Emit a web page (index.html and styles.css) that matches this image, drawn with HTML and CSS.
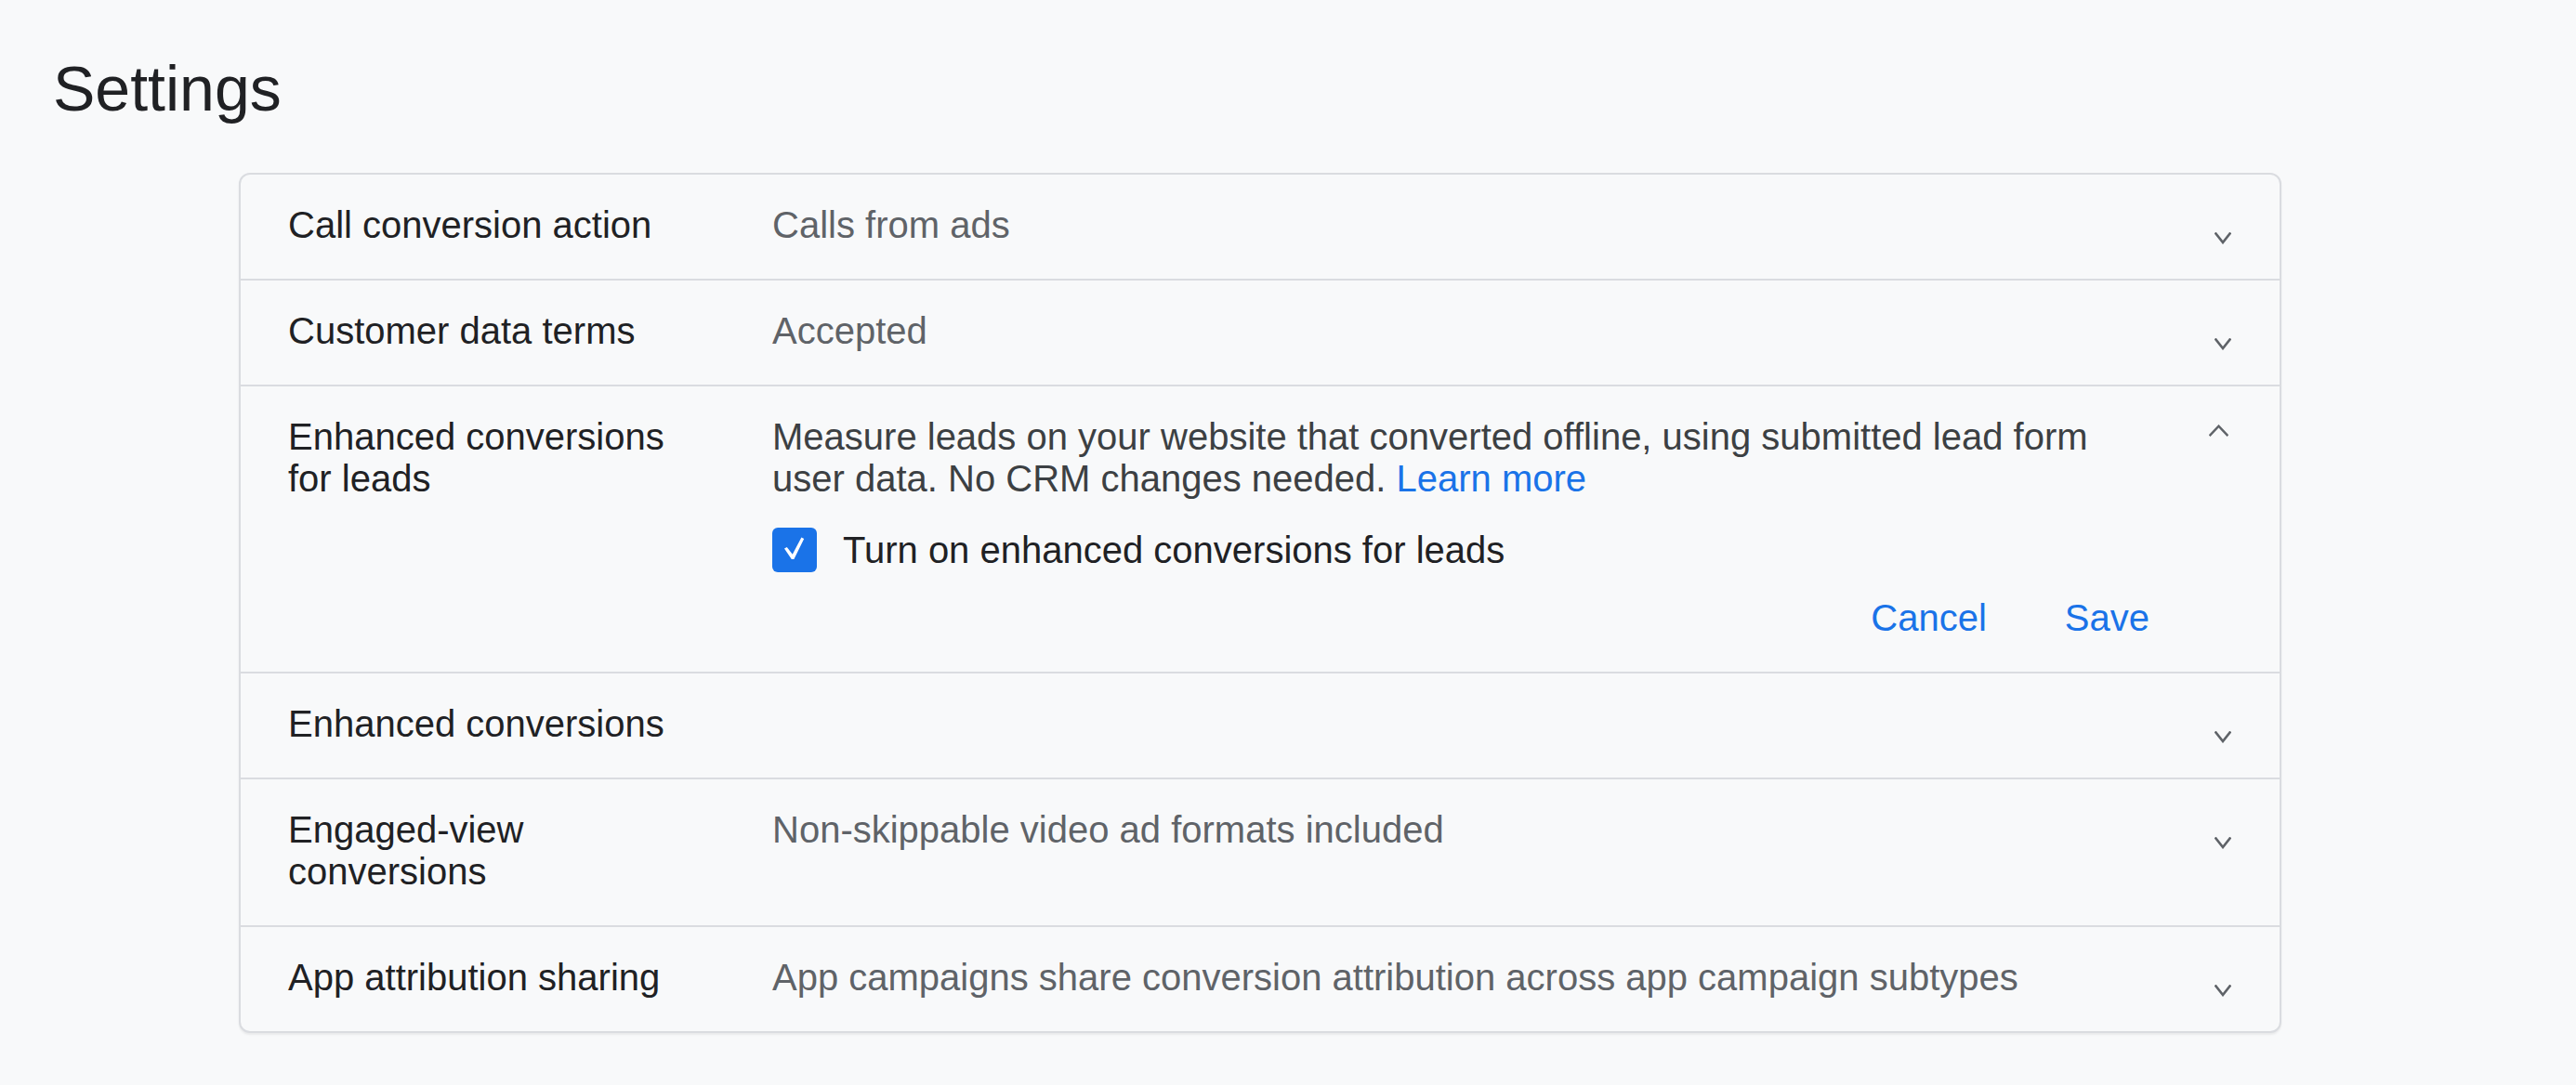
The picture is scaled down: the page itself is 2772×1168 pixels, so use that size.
FILE: index.html
```html
<!DOCTYPE html>
<html lang="en">
<head>
<meta charset="utf-8">
<title>Settings</title>
<link rel="stylesheet" href="styles.css">
</head>
<body>
<main class="page">
  <h1 class="page-title">Settings</h1>

  <section class="card">
    <div class="row">
      <div class="row-label">Call conversion action</div>
      <div class="row-value">Calls from ads</div>
      <div class="row-toggle">
        <svg class="chev chev-down" width="18" height="13" viewBox="0 0 18 13"><polyline points="1.5,1.5 9,11 16.5,1.5"/></svg>
      </div>
    </div>

    <div class="row">
      <div class="row-label">Customer data terms</div>
      <div class="row-value">Accepted</div>
      <div class="row-toggle">
        <svg class="chev chev-down" width="18" height="13" viewBox="0 0 18 13"><polyline points="1.5,1.5 9,11 16.5,1.5"/></svg>
      </div>
    </div>

    <div class="row row-open">
      <div class="row-label">Enhanced conversions<br>for leads</div>
      <div class="row-body">
        <p class="row-desc">Measure leads on your website that converted offline, using submitted lead form user data. No CRM changes needed. <a class="link" href="#">Learn more</a></p>
        <label class="check-row">
          <span class="checkbox">
            <svg width="48" height="48" viewBox="0 0 48 48"><path d="M13 22.6 L15.8 21 L21.8 28.8 L31.4 10.4 L34.2 12 L23.4 34 L20.8 34 Z"/></svg>
          </span>
          <span class="check-text">Turn on enhanced conversions for leads</span>
        </label>
        <div class="actions">
          <button class="text-btn" type="button">Cancel</button>
          <button class="text-btn" type="button">Save</button>
        </div>
      </div>
      <div class="row-toggle">
        <svg class="chev chev-up" width="22" height="13" viewBox="0 0 22 13"><polyline points="1.5,11.5 11,1.5 20.5,11.5"/></svg>
      </div>
    </div>

    <div class="row">
      <div class="row-label">Enhanced conversions</div>
      <div class="row-value"></div>
      <div class="row-toggle">
        <svg class="chev chev-down" width="18" height="13" viewBox="0 0 18 13"><polyline points="1.5,1.5 9,11 16.5,1.5"/></svg>
      </div>
    </div>

    <div class="row">
      <div class="row-label">Engaged-view<br>conversions</div>
      <div class="row-value">Non-skippable video ad formats included</div>
      <div class="row-toggle">
        <svg class="chev chev-down" width="18" height="13" viewBox="0 0 18 13"><polyline points="1.5,1.5 9,11 16.5,1.5"/></svg>
      </div>
    </div>

    <div class="row">
      <div class="row-label">App attribution sharing</div>
      <div class="row-value">App campaigns share conversion attribution across app campaign subtypes</div>
      <div class="row-toggle">
        <svg class="chev chev-down" width="18" height="13" viewBox="0 0 18 13"><polyline points="1.5,1.5 9,11 16.5,1.5"/></svg>
      </div>
    </div>
  </section>
</main>
</body>
</html>
```

FILE: styles.css
```css
html, body {
  margin: 0;
  padding: 0;
}

body {
  background: #f8f9fa;
  color: #202124;
  font-family: "Liberation Sans", Arial, Helvetica, sans-serif;
}

.page {
  padding: 54px 0 60px 0;
}

.page-title {
  margin: 0 0 50px 57px;
  font-size: 68px;
  line-height: 82px;
  font-weight: 400;
  color: #202124;
}

/* settings panel */
.card {
  margin-left: 257px;
  width: 2198px;
  box-sizing: border-box;
  border: 2px solid #dadce0;
  border-radius: 12px;
  background: #f8f9fa;
  box-shadow: 0 2px 2px rgba(60, 64, 67, 0.08);
  overflow: hidden;
}

.row {
  display: grid;
  grid-template-columns: 521px 1fr 24px;
  padding: 32px 52px 35px 51px;
  font-size: 40px;
  line-height: 45px;
}

.row + .row {
  border-top: 2px solid #dadce0;
}

.row-label {
  color: #202124;
}

.row-value {
  color: #5f6368;
}

.row-toggle {
  display: flex;
  justify-content: flex-end;
  align-items: flex-start;
}

.chev {
  fill: none;
  stroke: #5f6368;
  stroke-width: 2.6;
  stroke-linecap: square;
  stroke-linejoin: miter;
}

.chev-down {
  margin-top: 30px;
}

.chev-up {
  margin-top: 9px;
  margin-right: 3px;
}

/* expanded row */
.row-body {
  display: flex;
  flex-direction: column;
}

.row-desc {
  margin: 0;
  max-width: 1460px;
  color: #3c4043;
}

.link {
  color: #1a73e8;
  text-decoration: none;
}

.check-row {
  display: flex;
  align-items: center;
  gap: 28px;
  margin-top: 30px;
  color: #202124;
}

.checkbox {
  width: 48px;
  height: 48px;
  border-radius: 6px;
  background: #1a73e8;
  flex: none;
  display: block;
}

.checkbox svg {
  display: block;
  fill: #ffffff;
}

.actions {
  display: flex;
  justify-content: flex-end;
  gap: 52px;
  margin-top: 27px;
  margin-right: 48px;
}

.text-btn {
  border: 0;
  background: none;
  padding: 0 16px;
  margin: 0;
  font: inherit;
  line-height: 45px;
  color: #1a73e8;
  cursor: pointer;
}
```
